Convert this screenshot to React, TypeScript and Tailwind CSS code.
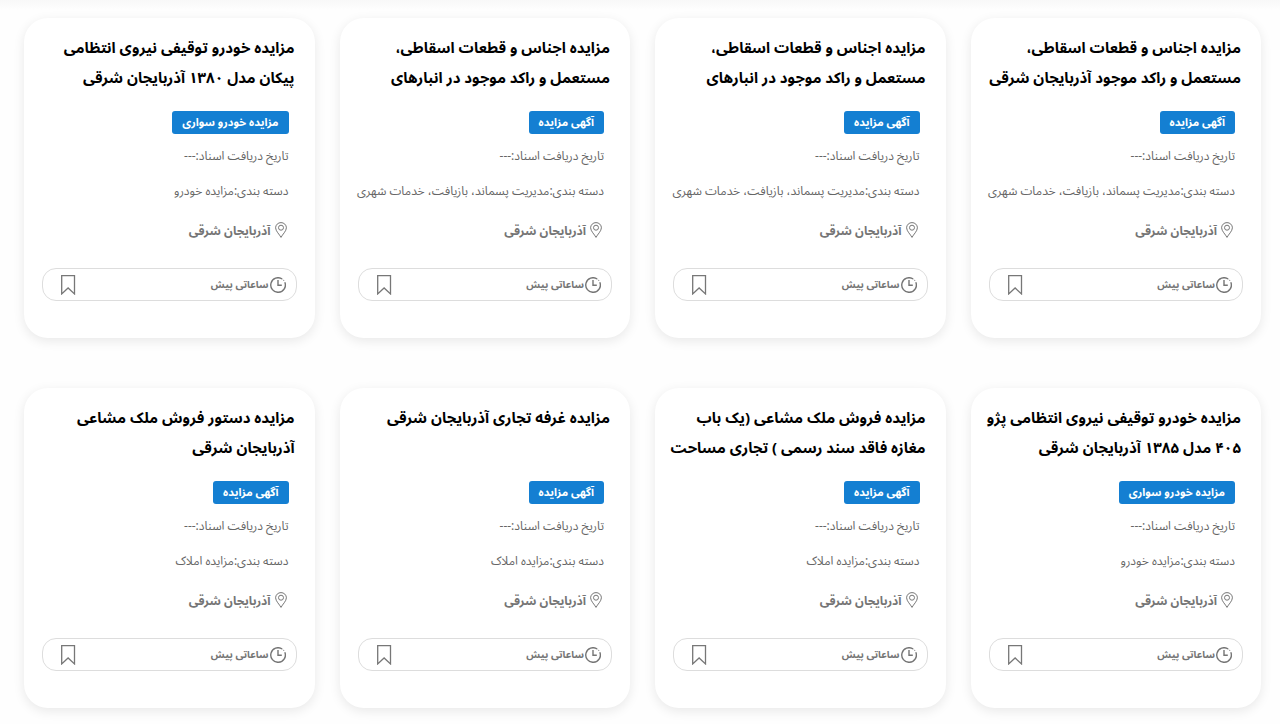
type Auction = {
    id: number;
    title: string[];
    tag: string;
    category: string;
};

const WASTE = "مدیریت پسماند، بازیافت، خدمات شهری";

const auctions: Auction[] = [
    { id: 1, title: ["مزایده اجناس و قطعات اسقاطی،", "مستعمل و راکد موجود آذربایجان شرقی"], tag: "آگهی مزایده", category: WASTE },
    { id: 2, title: ["مزایده اجناس و قطعات اسقاطی،", "مستعمل و راکد موجود در انبارهای"], tag: "آگهی مزایده", category: WASTE },
    { id: 3, title: ["مزایده اجناس و قطعات اسقاطی،", "مستعمل و راکد موجود در انبارهای"], tag: "آگهی مزایده", category: WASTE },
    { id: 4, title: ["مزایده خودرو توقیفی نیروی انتظامی", "پیکان مدل ۱۳۸۰ آذربایجان شرقی"], tag: "مزایده خودرو سواری", category: "مزایده خودرو" },
    { id: 5, title: ["مزایده خودرو توقیفی نیروی انتظامی پژو", "۴۰۵ مدل ۱۳۸۵ آذربایجان شرقی"], tag: "مزایده خودرو سواری", category: "مزایده خودرو" },
    { id: 6, title: ["مزایده فروش ملک مشاعی (یک باب", "مغازه فاقد سند رسمی ) تجاری مساحت"], tag: "آگهی مزایده", category: "مزایده املاک" },
    { id: 7, title: ["مزایده غرفه تجاری آذربایجان شرقی"], tag: "آگهی مزایده", category: "مزایده املاک" },
    { id: 8, title: ["مزایده دستور فروش ملک مشاعی", "آذربایجان شرقی"], tag: "آگهی مزایده", category: "مزایده املاک" },
];

function PinIcon() {
    return (
        <svg className="mb-1 h-4 w-3 shrink-0" viewBox="0 0 12 16" fill="none" stroke="#777" aria-hidden="true">
            <path d="M6 15.4C4.6 12.6.6 9 .6 5.8a5.4 5.2 0 0 1 10.8 0C11.4 9 7.4 12.6 6 15.4Z" />
            <circle cx="6" cy="5.7" r="2.5" />
        </svg>
    );
}

function ClockIcon() {
    return (
        <svg className="size-4 shrink-0" viewBox="0 0 16 16" fill="none" stroke="#757575" strokeWidth="1.4" aria-hidden="true">
            <path d="M14.8 5.2A7.3 7.3 0 1 1 12.2 2" />
            <path d="M13 2.7 14 3.8" strokeWidth="1" />
            <path d="M8 3v5.200h3.800" />
        </svg>
    );
}

function BookmarkIcon() {
    return (
        <svg className="block h-5 w-4" viewBox="0 0 16 20" fill="none" stroke="#777" strokeWidth="1.3" aria-hidden="true">
            <path d="M1.7.7h12.8v18.2L8.1 13 1.7 18.9Z" />
        </svg>
    );
}

function AuctionCard({ auction }: { auction: Auction }) {
    return (
        <article className="flex h-80 min-w-0 flex-col rounded-3xl bg-white pt-[15px] shadow-[0_3px_12px_rgba(0,0,0,0.09)]">
            <h2 className="h-15 px-5 text-[15px] leading-[30px] font-bold whitespace-nowrap text-black">
                {auction.title.map((line) => (
                    <span key={line} className="block">
                        {line}
                    </span>
                ))}
            </h2>

            <div className="mt-[18px] flex flex-col items-start px-[26px] whitespace-nowrap text-[#666]">
                <span className="h-[23px] rounded-[3px] bg-[#147fd2] px-2.5 text-[11px] leading-[23px] font-bold text-white">
                    {auction.tag}
                </span>
                <p className="mt-[13px] text-[12px] leading-5">تاریخ دریافت اسناد:---</p>
                <p className="mt-[15px] text-[12px] leading-5">دسته بندی:{auction.category}</p>
                <p className="mt-[18px] flex items-center gap-1 pr-0.5 text-[12px] leading-6 font-bold text-[#757575]">
                    <PinIcon />
                    آذربایجان شرقی
                </p>
            </div>

            <div className="mx-[18px] mt-6 flex h-[33px] items-center justify-between rounded-[14px] border border-[#ddd] pr-2.5 pl-[17px]">
                <span className="flex items-center gap-px text-[10px] font-bold text-[#757575]">
                    <ClockIcon />
                    ساعاتی پیش
                </span>
                <button type="button" aria-label="نشان کردن">
                    <BookmarkIcon />
                </button>
            </div>
        </article>
    );
}

export default function App() {
    return (
        <main dir="rtl" className="min-h-screen bg-[#fefefe] bg-linear-to-b from-[#f8f8f8] to-[#fefefe] to-[10px] pt-[18px] pr-[19px] pb-4 pl-6 font-['Noto_Sans_Arabic','DejaVu_Sans',sans-serif]">
            <div className="grid grid-cols-4 gap-x-[25px] gap-y-[50px]">
                {auctions.map((auction) => (
                    <AuctionCard key={auction.id} auction={auction} />
                ))}
            </div>
        </main>
    );
}
